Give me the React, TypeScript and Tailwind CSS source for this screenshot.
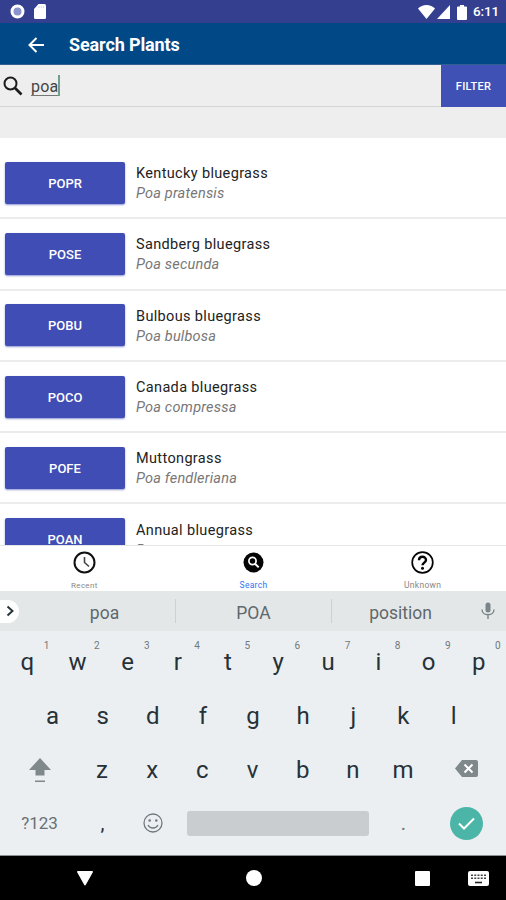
import React from 'react';

const plants = [
  { code: 'POPR', name: 'Kentucky bluegrass', latin: 'Poa pratensis' },
  { code: 'POSE', name: 'Sandberg bluegrass', latin: 'Poa secunda' },
  { code: 'POBU', name: 'Bulbous bluegrass', latin: 'Poa bulbosa' },
  { code: 'POCO', name: 'Canada bluegrass', latin: 'Poa compressa' },
  { code: 'POFE', name: 'Muttongrass', latin: 'Poa fendleriana' },
  { code: 'POAN', name: 'Annual bluegrass', latin: 'Poa annua' },
];

const topRow = ['q', 'w', 'e', 'r', 't', 'y', 'u', 'i', 'o', 'p'];
const middleRow = ['a', 's', 'd', 'f', 'g', 'h', 'j', 'k', 'l'];
const bottomRow = ['z', 'x', 'c', 'v', 'b', 'n', 'm'];

const StatusBar = () => (
  <div className="flex h-[23px] shrink-0 items-center justify-between bg-[#343f90] pl-2.5 pr-[7px] text-white">
    <div className="flex items-center gap-[9px]">
      <svg width="15" height="15" viewBox="0 0 15 15">
        <circle cx="7.5" cy="7.5" r="5.5" fill="#8b93cc" stroke="#fff" strokeWidth="3" />
      </svg>
      <svg width="12" height="15" viewBox="0 0 12 15" fill="currentColor">
        <path d="M4.500 0h6Q12 0 12 1.500V13.500Q12 15 10.500 15H1.500Q0 15 0 13.500V5z" />
        <path d="M5 2v2M7.300 2v2M9.500 2v2" stroke="#d5d8ee" strokeWidth="1" />
      </svg>
    </div>
    <div className="flex items-center pt-px">
      <svg width="17" height="14" viewBox="0 0 17 14" fill="currentColor">
        <path d="M8.500 14L0 3.500C2.300 1.300 5.200 0 8.500 0S14.700 1.300 17 3.500z" />
      </svg>
      <svg className="ml-0.5" width="13" height="14" viewBox="0 0 13 14" fill="currentColor">
        <path d="M0 14L13 0v14z" />
      </svg>
      <svg className="ml-[7px]" width="10" height="15" viewBox="0 0 10 15" fill="currentColor">
        <path d="M3 0h4v1.500h2q1 0 1 1V14q0 1-1 1H1q-1 0-1-1V2.500q0-1 1-1h2z" />
      </svg>
      <span className="ml-1.5 w-[26px] whitespace-nowrap text-[13.500px] font-medium leading-none tracking-[-0.100px]">6:11</span>
    </div>
  </div>
);

const Header = () => (
  <header className="flex h-[42px] shrink-0 items-center border-b border-[#335f94] bg-[#014886] pl-7 pt-0.5 text-white">
    <svg width="17" height="16" viewBox="0 0 17 16" fill="none" stroke="currentColor" strokeWidth="2">
      <path d="M16 8H2M8.500 1L1.500 8l7 7" />
    </svg>
    <h1 className="ml-6 text-[18px] font-bold leading-none tracking-[-0.120px]">Search Plants</h1>
  </header>
);

const SearchBar = () => (
  <div className="flex h-[42px] shrink-0 border-b border-[#d2d5d5] bg-[#eee]">
    <div className="flex flex-1 items-center pl-[3px]">
      <svg width="20" height="20" viewBox="0 0 20 20" fill="none" stroke="#1b1b1b">
        <circle cx="7.500" cy="7.500" r="6" strokeWidth="2" />
        <path d="M12 12l6.500 6.500" strokeWidth="2.600" />
      </svg>
      <span className="ml-2 mt-0.5 border-b border-[#777] text-[16px] leading-[17px] tracking-[0.200px] text-[#444]">poa</span>
      <span className="h-[21px] w-[1.500px] bg-[#6fa08c]" />
    </div>
    <button className="-mb-px w-[65px] bg-[#3f51b5] pt-[3px] text-[11px] font-medium tracking-[0.300px] text-white">FILTER</button>
  </div>
);

const PlantRow = ({ code, name, latin }: { code: string; name: string; latin: string }) => (
  <div className="flex h-[71.300px] items-center border-b-2 border-[#ececec] pl-[5px]">
    <div className="flex h-[42px] w-[120px] items-center justify-center rounded-[2px] bg-[#3f4db5] pt-0.5 text-[13px] font-medium text-white shadow-[0_1px_2px_rgba(63,77,181,0.6)]">
      {code}
    </div>
    <div className="ml-[11px] pt-[3px]">
      <p className="text-[14.500px] leading-[20px] tracking-[0.350px] text-[#222]">{name}</p>
      <p className="text-[14.500px] italic leading-[20px] tracking-[0.200px] text-[#777]">{latin}</p>
    </div>
  </div>
);

const TabBar = () => (
  <nav className="grid h-[46px] shrink-0 grid-cols-3 border-t border-[#e6e6e6] bg-white text-[8px] leading-[9px] tracking-[0.300px] text-[#888]">
    <div className="flex flex-col items-center gap-[7px] pt-[5px]">
      <svg width="23" height="23" viewBox="0 0 23 23" fill="none" stroke="#111">
        <circle cx="11.500" cy="11.500" r="10" strokeWidth="2" />
        <path d="M11.500 6v5.500l4.500 4" strokeWidth="1.600" stroke="#444" />
      </svg>
      <span>Recent</span>
    </div>
    <div className="flex flex-col items-center gap-[7px] pl-px pt-[5px] text-[#2f74f5]">
      <svg width="23" height="23" viewBox="0 0 23 23" fill="none" stroke="#fff">
        <circle cx="11.500" cy="11.500" r="10" fill="#050505" stroke="none" />
        <circle cx="10.500" cy="10" r="3.600" strokeWidth="1.700" />
        <path d="M13 12.700l3.700 3.700" strokeWidth="2" />
      </svg>
      <span className="text-[8.500px]">Search</span>
    </div>
    <div className="flex flex-col items-center gap-[7px] pl-[2px] pt-[5px]">
      <svg width="23" height="23" viewBox="0 0 23 23" fill="none" stroke="#050505">
        <circle cx="11.500" cy="11.500" r="10.300" strokeWidth="1.700" />
        <path d="M8 9.200C8 4.700 15 4.700 15 9c0 2.500-3.500 2.700-3.500 5.300" strokeWidth="2.400" />
        <circle cx="11.500" cy="17.200" r="1.500" fill="#050505" stroke="none" />
      </svg>
      <span className="text-[8.500px]">Unknown</span>
    </div>
  </nav>
);

const Suggestions = () => (
  <div className="flex h-10 shrink-0 items-center bg-[#e4e7e8] text-[17.500px] text-[#5f686c]">
    <div className="flex h-[23px] w-[19px] items-center rounded-r-full bg-white pl-1.5">
      <svg width="8" height="12" viewBox="0 0 8 12" fill="none" stroke="#263238" strokeWidth="1.900">
        <path d="M1.500 1.500L6.500 6l-5 4.500" />
      </svg>
    </div>
    <div className="ml-[15px] w-[141px] pt-1 text-center">poa</div>
    <div className="h-6 w-px bg-[#cdd1d3]" />
    <div className="w-[155px] pt-1 text-center">POA</div>
    <div className="h-6 w-px bg-[#cdd1d3]" />
    <div className="w-[137px] pt-1 text-center">position</div>
    <svg className="ml-3" width="14" height="18" viewBox="0 0 14 18" fill="none" stroke="#7b8488" strokeWidth="1.400">
      <rect x="4.500" y="0.500" width="5" height="10" rx="2.500" fill="#7b8488" stroke="none" />
      <path d="M1 7.500c0 7 12 7 12 0M7 13v4" />
    </svg>
  </div>
);

const Key = ({ label, hint }: { label: string; hint?: string }) => (
  <div className="relative flex w-[50.150px] items-center justify-center pt-px">
    {label}
    {hint && <span className="absolute right-[3px] top-[7px] text-[10px] leading-none text-[#70787c]">{hint}</span>}
  </div>
);

const Keyboard = () => (
  <div className="flex h-[225px] shrink-0 flex-col border-b border-[#8c8f90] bg-[#eceff1] pt-[3px] text-[24px] leading-none text-[#263238]">
    <div className="flex h-[54px] justify-center">
      {topRow.map((k, i) => <Key key={k} label={k} hint={String((i + 1) % 10)} />)}
    </div>
    <div className="flex h-[54px] justify-center">
      {middleRow.map((k) => <Key key={k} label={k} />)}
    </div>
    <div className="flex h-[54px] items-center">
      <div className="flex w-[77px] justify-center pl-0.5 pt-0.5">
        <svg width="22" height="26" viewBox="0 0 22 26" fill="#7f888b">
          <path d="M11 1L22 13h-6.500v5.500h-9V13H0z" />
          <path d="M6 23.500h10v1.500H6z" />
        </svg>
      </div>
      {bottomRow.map((k) => <Key key={k} label={k} />)}
      <div className="flex w-[78px] justify-center pb-0.5">
        <svg width="23" height="17" viewBox="0 0 23 17">
          <path d="M7 0h14q2 0 2 2v13q0 2-2 2H7L0 8.500z" fill="#7f888b" />
          <path d="M9.500 4.500l8 8M17.500 4.500l-8 8" stroke="#fff" strokeWidth="2" />
        </svg>
      </div>
    </div>
    <div className="flex h-[54px] items-center">
      <div className="flex w-[77px] justify-center pl-0.5 text-[17px] text-[#687174]">?123</div>
      <div className="flex w-[51px] justify-center text-[20px]">,</div>
      <div className="flex w-[49px] justify-center">
        <svg width="20" height="20" viewBox="0 0 20 20" fill="none" stroke="#70797d" strokeWidth="1.300">
          <circle cx="10" cy="10" r="9" />
          <path d="M5 12c2 4 8 4 10 0" />
          <circle cx="6.700" cy="7.500" r="1.300" fill="#70797d" stroke="none" />
          <circle cx="13.300" cy="7.500" r="1.300" fill="#70797d" stroke="none" />
        </svg>
      </div>
      <div className="ml-[10px] h-[25px] w-[182px] rounded-[3px] bg-[#c9cdcf]" />
      <div className="flex w-[69px] justify-center text-[20px] text-[#70787c]">.</div>
      <div className="ml-3 flex size-[33px] items-center justify-center rounded-full bg-[#4bb5a8]">
        <svg width="17" height="13" viewBox="0 0 17 13" fill="none" stroke="#fff" strokeWidth="2">
          <path d="M1 6.500L6 11.500 16 1.500" />
        </svg>
      </div>
    </div>
  </div>
);

const NavigationBar = () => (
  <div className="flex h-11 shrink-0 items-center bg-black pl-[77px] text-white">
    <svg width="16" height="15" viewBox="0 0 16 15" fill="currentColor">
      <path d="M1 0h14q1.500 0 .7 1.500L9 13.500q-1 2-2 0L.3 1.500Q-.5 0 1 0z" />
    </svg>
    <div className="ml-[153px] size-4 rounded-full bg-white" />
    <div className="ml-[153px] size-[15px] rounded-[1px] bg-white" />
    <svg className="ml-[38px]" width="21" height="15" viewBox="0 0 21 15">
      <rect width="21" height="15" rx="2" fill="#fff" />
      <path d="M3 4.300h15M3 7.300h15" stroke="#444" strokeWidth="1.600" strokeDasharray="2 1.250" />
      <path d="M7 11.500h7" stroke="#222" strokeWidth="1.600" />
    </svg>
  </div>
);

const App = () => (
  <div className="flex h-[900px] w-[506px] flex-col overflow-hidden bg-white font-['Roboto',sans-serif]">
    <StatusBar />
    <Header />
    <SearchBar />
    <div className="h-[31px] shrink-0 bg-[#eee]" />
    <main className="min-h-0 flex-1 overflow-hidden bg-white pt-[10px]">
      {plants.map((plant) => <PlantRow key={plant.code} {...plant} />)}
    </main>
    <TabBar />
    <Suggestions />
    <Keyboard />
    <NavigationBar />
  </div>
);

export default App;
